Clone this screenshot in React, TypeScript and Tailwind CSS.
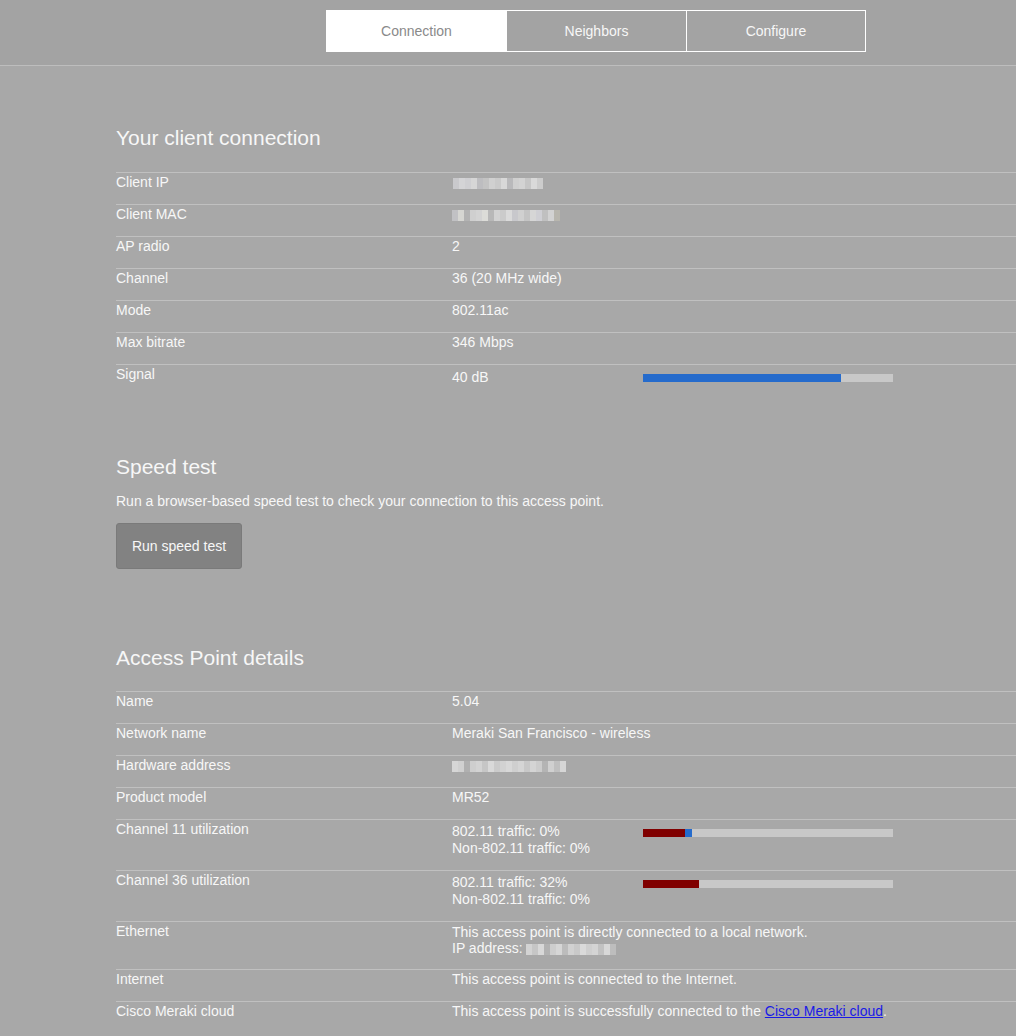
import React from "react"

const font = { fontFamily: '"Liberation Sans", Arial, sans-serif' }

// pixelated placeholder for redacted values
function Redacted({ shades }: { shades: string[] }) {
  return (
    <span className="inline-flex h-[11px] align-middle blur-[0.4px]">
      {shades.map((c, i) => (
        <span key={i} className="h-full w-[6px]" style={{ backgroundColor: c }} />
      ))}
    </span>
  )
}

const ipShades = ["#c9c9cc", "#d4d4d6", "#cfcfd2", "#d6d6d6", "#bdbdc0", "#c3c3c3", "#d0d0d0", "#cacaca", "#d8d8d8", "#b9b9bb", "#cfcfcf", "#d3d3d3", "#c6c6c6", "#d9d9d9", "#cccccc"]
const macShades = ["#c1c1c4", "#d6d6d2", "#b3b3b3", "#cfcfcf", "#d3d3d3", "#dcdcd8", "#b8b8b8", "#d2d2d2", "#cbcbcb", "#dadada", "#c8c8cc", "#d0d0d0", "#c4c4c4", "#d6d6d6", "#cfcfd4", "#c0c0c0", "#d2d2d2", "#b8b6ae"]
const hwShades = ["#d6d6d6", "#d0d0d0", "#b0b0b0", "#cecece", "#d3d3d3", "#c6c6c6", "#d9d9d9", "#cbcbcb", "#d2d2d2", "#d8d8d8", "#cfcfcf", "#d5d5d5", "#c8c8c8", "#d4d4d4", "#cccccc", "#b4b4b4", "#d0d0d0", "#c0c0c0", "#d6d6d6"]
const ethShades = ["#d3d3d3", "#c6c6c6", "#d8d8d8", "#b2b2b2", "#cdcdcd", "#d6d6d6", "#bcbcbc", "#d1d1d1", "#c9c9c9", "#dadada", "#cfcfcf", "#d4d4d4", "#c2c2c2", "#d8d8d8", "#bdbdbd"]

function Bar({ parts }: { parts: { w: number; color: string }[] }) {
  return (
    <div className="flex h-[8px] w-[250px] bg-[#c8c8c8]">
      {parts.map((p, i) => (
        <div key={i} className="h-full" style={{ width: p.w, backgroundColor: p.color }} />
      ))}
    </div>
  )
}

function Row({
  label,
  children,
  bar,
  h = "h-[32px]",
  valuePad = "pt-[1px] leading-[17px]",
}: {
  label: string
  children: React.ReactNode
  bar?: React.ReactNode
  h?: string
  valuePad?: string
}) {
  return (
    <div className={`flex border-t border-[#c0c0c0] ${h}`}>
      <div className="w-[336px] shrink-0 pt-[1px] leading-[17px]">{label}</div>
      <div className={`w-[191px] shrink-0 whitespace-nowrap ${valuePad}`}>{children}</div>
      {bar && <div className="pt-[9px]">{bar}</div>}
    </div>
  )
}

export default function App() {
  return (
    <div className="min-h-screen w-full bg-[#a8a8a8] text-[14px] text-[#f7f7f7]" style={font}>
      {/* Header tabs */}
      <div className="flex h-[66px] border-b border-[#bdbdbd] bg-[#a3a3a3] pl-[326px] pt-[10px]">
        <div className="flex h-[42px]">
          <div className="flex w-[181px] items-center justify-center border border-white bg-white text-[#8a8a8a]">
            Connection
          </div>
          <div className="flex w-[179px] items-center justify-center border-y border-white">Neighbors</div>
          <div className="flex w-[180px] items-center justify-center border border-white">Configure</div>
        </div>
      </div>

      <div className="pl-[116px]">
        {/* Client connection */}
        <h2 className="pt-[60px] text-[21px] leading-[24px]">Your client connection</h2>
        <div className="mt-[22px]">
          <Row label="Client IP">
            <span className="inline-block pl-[1px]"><Redacted shades={ipShades} /></span>
          </Row>
          <Row label="Client MAC">
            <span className="inline-block"><Redacted shades={macShades} /></span>
          </Row>
          <Row label="AP radio">2</Row>
          <Row label="Channel">36 (20 MHz wide)</Row>
          <Row label="Mode">802.11ac</Row>
          <Row label="Max bitrate">346 Mbps</Row>
          <Row
            label="Signal"
            valuePad="pt-[4px] leading-[17px]"
            bar={<Bar parts={[{ w: 198, color: "#256bcc" }]} />}
          >
            40 dB
          </Row>
        </div>

        {/* Speed test */}
        <h2 className="mt-[59px] text-[21px] leading-[24px]">Speed test</h2>
        <p className="mt-[14px] leading-[17px]">
          Run a browser-based speed test to check your connection to this access point.
        </p>
        <button className="mt-[13px] h-[46px] w-[126px] rounded-[3px] border border-[#7a7a7a] bg-[#828282] text-[14px] text-[#f7f7f7]">
          Run speed test
        </button>

        {/* Access point details */}
        <h2 className="mt-[77px] text-[21px] leading-[24px]">Access Point details</h2>
        <div className="mt-[21px]">
          <Row label="Name">5.04</Row>
          <Row label="Network name">Meraki San Francisco - wireless</Row>
          <Row label="Hardware address">
            <span className="inline-block"><Redacted shades={hwShades} /></span>
          </Row>
          <Row label="Product model">MR52</Row>
          <Row
            label="Channel 11 utilization"
            h="h-[51px]"
            valuePad="pt-[3px] leading-[17px]"
            bar={<Bar parts={[{ w: 42, color: "#800000" }, { w: 7, color: "#256bcc" }]} />}
          >
            802.11 traffic: 0%
            <br />
            Non-802.11 traffic: 0%
          </Row>
          <Row
            label="Channel 36 utilization"
            h="h-[51px]"
            valuePad="pt-[3px] leading-[17px]"
            bar={<Bar parts={[{ w: 56, color: "#800000" }]} />}
          >
            802.11 traffic: 32%
            <br />
            Non-802.11 traffic: 0%
          </Row>
          <Row label="Ethernet" h="h-[48px]" valuePad="pt-[2px] leading-[16px]">
            This access point is directly connected to a local network.
            <br />
            IP address: <Redacted shades={ethShades} />
          </Row>
          <Row label="Internet">This access point is connected to the Internet.</Row>
          <Row label="Cisco Meraki cloud" h="h-[35px]">
            This access point is successfully connected to the{" "}
            <a href="#" className="text-[#1a1ae6] underline">
              Cisco Meraki cloud
            </a>
            .
          </Row>
        </div>
      </div>
    </div>
  )
}
